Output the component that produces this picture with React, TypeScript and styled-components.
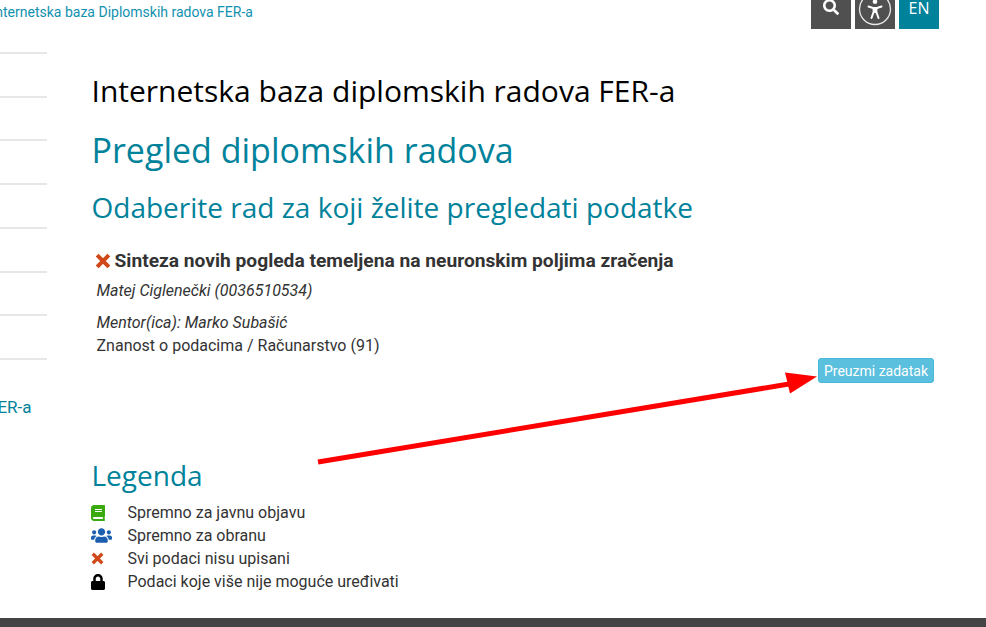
import { createGlobalStyle, styled } from "styled-components";
import { FaBook, FaLock, FaSearch, FaUsers } from "react-icons/fa";
import type { ReactNode } from "react";

const GlobalStyle = createGlobalStyle`
  html, body {
    margin: 0;
    padding: 0;
    background: #fff;
  }
  body {
    font-family: Roboto, "Liberation Sans", sans-serif;
    font-size: 16px;
    color: #333;
  }
`;

const sidebarRows = 8;

const legend: { icon: ReactNode; label: string; shift: number }[] = [
  { icon: <FaBook color="#3aaa0e" size={16} />, label: "Spremno za javnu objavu", shift: 0 },
  { icon: <FaUsers color="#1c5fb0" size={21} />, label: "Spremno za obranu", shift: 1 },
  { icon: <CrossIcon size={13} />, label: "Svi podaci nisu upisani", shift: 1 },
  { icon: <FaLock color="#000" size={16} />, label: "Podaci koje više nije moguće uređivati", shift: 0 },
];

function CrossIcon({ size }: { size: number }) {
  return (
    <svg width={size} height={size} viewBox="0 0 12 12">
      <path d="M1.6 1.6 L10.4 10.4 M10.4 1.6 L1.6 10.4" stroke="#d0491a" strokeWidth="3" />
    </svg>
  );
}

function AccessIcon() {
  return (
    <svg width="34" height="29" viewBox="0 0 34 29" fill="none">
      <circle cx="17" cy="9" r="15.5" stroke="#e8e8e8" strokeWidth="1.3" />
      <circle cx="17" cy="1.8" r="2.3" fill="#fff" />
      <path
        d="M10.5 6.5 L15 8 H19 L23.5 6.5 M15.6 8.5 V12 L13.5 18 M18.4 8.5 V12 L20.5 18"
        stroke="#fff"
        strokeWidth="2"
        strokeLinecap="round"
        strokeLinejoin="round"
      />
      <path d="M15 8 H19 V13 H15 Z" fill="#fff" />
    </svg>
  );
}

export default function App() {
  return (
    <>
      <GlobalStyle />
      <Page>
        <TopBar>
          <Breadcrumb>Internetska baza Diplomskih radova FER-a</Breadcrumb>
          <TopButtons>
            <TopButton>
              <SearchIcon>
                <FaSearch size={16} color="#fff" />
              </SearchIcon>
            </TopButton>
            <TopButton>
              <AccessIcon />
            </TopButton>
            <LangButton>EN</LangButton>
          </TopButtons>
        </TopBar>

        <Body>
          <Sidebar>
            {Array.from({ length: sidebarRows }).map((_, i) => (
              <SidebarRow key={i} />
            ))}
            <SidebarLink>FER-a</SidebarLink>
          </Sidebar>

          <Main>
            <SiteTitle>Internetska baza diplomskih radova FER-a</SiteTitle>
            <PageTitle>Pregled diplomskih radova</PageTitle>
            <SubTitle>Odaberite rad za koji želite pregledati podatke</SubTitle>

            <Thesis>
              <ThesisTitle>
                <CrossIcon size={16} />
                Sinteza novih pogleda temeljena na neuronskim poljima zračenja
              </ThesisTitle>
              <Author>Matej Ciglenečki (0036510534)</Author>
              <Mentor>Mentor(ica): Marko Subašić</Mentor>
              <Field>Znanost o podacima / Računarstvo (91)</Field>
              <Actions>
                <DownloadButton>Preuzmi zadatak</DownloadButton>
              </Actions>
            </Thesis>

            <LegendTitle>Legenda</LegendTitle>
            <LegendList>
              {legend.map((item) => (
                <LegendRow key={item.label}>
                  <LegendIcon $shift={item.shift}>{item.icon}</LegendIcon>
                  {item.label}
                </LegendRow>
              ))}
            </LegendList>
          </Main>
        </Body>

        <Footer />

        <Arrow viewBox="0 0 986 627" width="986" height="627">
          <line x1="318" y1="462" x2="795" y2="383" stroke="#fe0000" strokeWidth="5" />
          <polygon points="817,376.5 790,393.5 785,372.5" fill="#fe0000" />
        </Arrow>
      </Page>
    </>
  );
}

const Page = styled.div`
  position: relative;
  display: flex;
  flex-direction: column;
  width: 986px;
  height: 627px;
  overflow: hidden;
`;

const TopBar = styled.header`
  display: flex;
  justify-content: space-between;
  height: 29px;
  padding-right: 47px;
`;

const Breadcrumb = styled.div`
  margin: 4px 0 0 -8.5px;
  font-size: 14px;
  line-height: 16px;
  color: #1191b0;
  white-space: nowrap;
`;

const TopButtons = styled.div`
  display: flex;
  gap: 4px;
`;

const TopButton = styled.div`
  display: flex;
  justify-content: center;
  width: 40px;
  height: 29px;
  overflow: hidden;
  background: #505050;
`;

const SearchIcon = styled.span`
  display: block;
  height: 16px;
  margin-top: -1px;
`;

const LangButton = styled(TopButton)`
  background: #00829b;
  color: #fff;
  font-family: "Open Sans", sans-serif;
  font-size: 16px;
  line-height: 16px;
`;

const Body = styled.div`
  display: flex;
  flex: 1;
  min-height: 0;
`;

const Sidebar = styled.nav`
  flex: none;
  width: 47px;
  padding-top: 23px;
  overflow: hidden;
`;

const SidebarRow = styled.div`
  height: 41.72px;
  border-top: 2px solid #e7e7e7;

  &:nth-child(${sidebarRows}) {
    height: 37px;
  }
`;

const SidebarLink = styled.div`
  margin-left: -12px;
  font-size: 17px;
  line-height: 20px;
  color: #00829b;
  white-space: nowrap;
`;

const Main = styled.main`
  flex: 1;
  padding: 0 52px 0 44.5px;
`;

const SiteTitle = styled.h1`
  margin: 43px 0 0;
  font-family: "Open Sans", sans-serif;
  font-size: 30px;
  font-weight: 400;
  line-height: 38px;
  color: #000;
`;

const PageTitle = styled.h2`
  margin: 17px 0 0;
  font-family: "Open Sans", sans-serif;
  font-size: 34px;
  font-weight: 400;
  line-height: 46px;
  color: #00829b;
`;

const SubTitle = styled.h3`
  margin: 16px 0 0;
  font-family: "Open Sans", sans-serif;
  font-size: 28px;
  font-weight: 400;
  line-height: 36px;
  color: #00829b;
`;

const Thesis = styled.section`
  margin-top: 24px;
`;

const ThesisTitle = styled.div`
  display: flex;
  align-items: center;
  gap: 4px;
  margin-left: 3px;
  font-size: 19.2px;
  font-weight: 700;
  line-height: 24px;
  color: #333;
`;

const Author = styled.div`
  margin: 6px 0 0 5px;
  font-size: 16px;
  font-style: italic;
  line-height: 24px;
`;

const Mentor = styled(Author)`
  margin-top: 8px;
`;

const Field = styled.div`
  margin-left: 5px;
  font-size: 16px;
  line-height: 22px;
`;

const Actions = styled.div`
  display: flex;
  justify-content: flex-end;
  padding-top: 1px;
`;

const DownloadButton = styled.button`
  height: 25px;
  padding: 0 5px;
  border: 1px solid #46b8da;
  border-radius: 3px;
  background: #5bc0de;
  color: #fff;
  font-family: Roboto, sans-serif;
  font-size: 14px;
`;

const LegendTitle = styled.h3`
  margin: 74px 0 0;
  font-family: "Open Sans", sans-serif;
  font-size: 28px;
  font-weight: 400;
  line-height: 36px;
  color: #00829b;
`;

const LegendList = styled.ul`
  list-style: none;
  margin: 8px 0 0;
  padding: 0;
`;

const LegendRow = styled.li`
  display: flex;
  align-items: center;
  height: 23px;
  font-size: 16px;
  color: #333;
`;

const LegendIcon = styled.span<{ $shift: number }>`
  display: flex;
  flex: none;
  box-sizing: border-box;
  width: 38px;
  margin-left: -2px;
  padding-left: ${({ $shift }) => $shift}px;

  svg {
    flex: none;
  }
`;

const Footer = styled.footer`
  flex: none;
  height: 9px;
  background: #444;
`;

const Arrow = styled.svg`
  position: absolute;
  inset: 0;
  pointer-events: none;
`;
